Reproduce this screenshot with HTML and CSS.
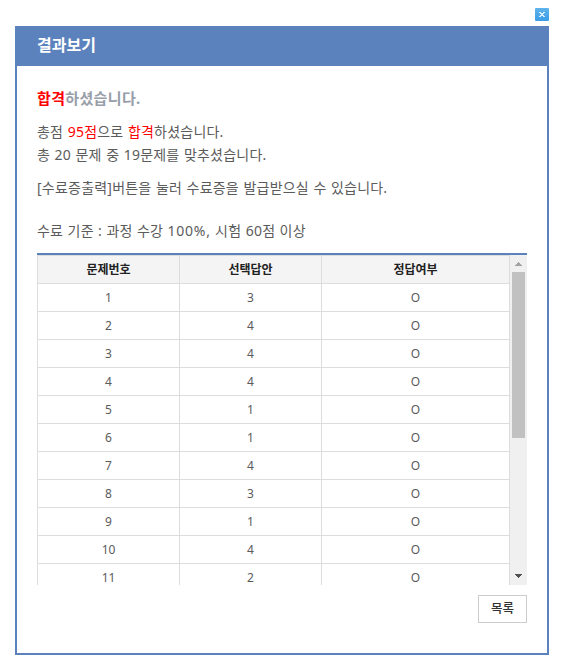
FILE: index.html
```html
<!DOCTYPE html>
<html lang="ko">
<head>
<meta charset="utf-8">
<title>결과보기</title>
<link rel="stylesheet" href="styles.css">
</head>
<body>
<div class="popup">
  <div class="topbar">
    <button class="close" aria-label="닫기">
      <svg width="14" height="13" viewBox="0 0 14 13" shape-rendering="crispEdges"><path fill="#d9eefb" d="M4 4h2v1h2V4h2v1H9v1H8v1h1v1h1v1H8V8H6v1H4V8h1V7h1V6H5V5H4z"/></svg>
    </button>
  </div>
  <section class="panel">
    <h1 class="title">결과보기</h1>
    <div class="content">
      <h2 class="verdict"><em>합격</em>하셨습니다.</h2>
      <p class="score">총점 <em>95점</em>으로 <em>합격</em>하셨습니다.<br>총 20 문제 중 19문제를 맞추셨습니다.</p>
      <p class="guide">[수료증출력]버튼을 눌러 수료증을 발급받으실 수 있습니다.</p>
      <p class="criteria">수료 기준 : 과정 수강 <span class="rate">100%,</span> 시험 60점 이상</p>
      <div class="results">
        <table>
          <thead><tr><th class="c1">문제번호</th><th class="c2">선택답안</th><th>정답여부</th></tr></thead>
          <tbody>
            <tr><td>1</td><td>3</td><td>O</td></tr>
            <tr><td>2</td><td>4</td><td>O</td></tr>
            <tr><td>3</td><td>4</td><td>O</td></tr>
            <tr><td>4</td><td>4</td><td>O</td></tr>
            <tr><td>5</td><td>1</td><td>O</td></tr>
            <tr><td>6</td><td>1</td><td>O</td></tr>
            <tr><td>7</td><td>4</td><td>O</td></tr>
            <tr><td>8</td><td>3</td><td>O</td></tr>
            <tr><td>9</td><td>1</td><td>O</td></tr>
            <tr><td>10</td><td>4</td><td>O</td></tr>
            <tr><td>11</td><td>2</td><td>O</td></tr>
          </tbody>
        </table>
        <div class="scrollbar">
          <svg class="arrow" width="17" height="17" viewBox="0 0 17 17" shape-rendering="crispEdges"><path fill="#a3a3a3" d="M8 7h1v1h1v1h1v1h1v1H5v-1h1V9h1V8h1z"/></svg>
          <div class="thumb"></div>
          <svg class="arrow down" width="17" height="17" viewBox="0 0 17 17" shape-rendering="crispEdges"><path fill="#505050" d="M5 6h7v1h-1v1h-1v1H9v1H8V9H7V8H6V7H5z"/></svg>
        </div>
      </div>
      <div class="actions"><button class="list">목록</button></div>
    </div>
  </section>
</div>
</body>
</html>
```
FILE: styles.css
```css
* { box-sizing: border-box; }
body {
  margin: 0;
  background: #fff;
  color: #5b5b5b;
  font-family: "Noto Sans", "Noto Sans CJK KR", sans-serif;
  font-size: 14px;
}
h1, h2, p { margin: 0; font-weight: 400; white-space: nowrap; }
p { letter-spacing: .22px; word-spacing: .6px; }
em { font-style: normal; color: #f00; }
button { padding: 0; font-family: inherit; }
.popup { width: 534px; margin-left: 15px; }
.topbar { height: 26px; padding-top: 8px; display: flex; justify-content: flex-end; }
.close {
  width: 14px; height: 13px;
  border: 0; border-radius: 1px;
  background: linear-gradient(#5fb3ec, #3b9ce6);
}
.close svg { display: block; }
.panel { height: 629px; border: 2px solid #5b82bd; }
.title {
  height: 38px; line-height: 34px;
  padding-left: 20px;
  background: #5b82bd; color: #fff;
  font-size: 16px; font-weight: 700;
}
.content { padding: 20px 20px 0; }
.verdict { height: 24px; line-height: 24px; font-size: 15px; font-weight: 700; color: #979ea9; letter-spacing: .35px; }
.score { margin-top: 10px; line-height: 23px; }
.guide { margin-top: 10px; line-height: 23px; }
.criteria { margin-top: 20px; line-height: 23px; word-spacing: .5px; }
.rate { letter-spacing: .75px; }
.results {
  display: flex;
  height: 332px;
  margin-top: 11px;
  border-top: 2px solid #5b82bd;
  overflow: hidden;
}
table { width: 473px; flex: none; border-collapse: collapse; table-layout: fixed; }
th, td {
  height: 28px; padding: 0;
  border: 1px solid #ddd;
  font-size: 12px; line-height: 18px; text-align: center;
}
th { background: #f4f4f4; color: #222; font-weight: 700; }
.c1, .c2 { width: 142px; }
.scrollbar { width: 17px; display: flex; flex-direction: column; align-items: center; background: #f0f0f0; }
.arrow { display: block; flex: none; }
.thumb { width: 13px; height: 166px; background: #c1c1c1; }
.down { margin-top: auto; }
.actions { margin-top: 10px; display: flex; justify-content: flex-end; }
.list {
  width: 49px; height: 28px;
  padding-bottom: 4px;
  border: 1px solid #ccc; background: #fff;
  color: #333; font-size: 12.5px; font-weight: 500;
}
```
